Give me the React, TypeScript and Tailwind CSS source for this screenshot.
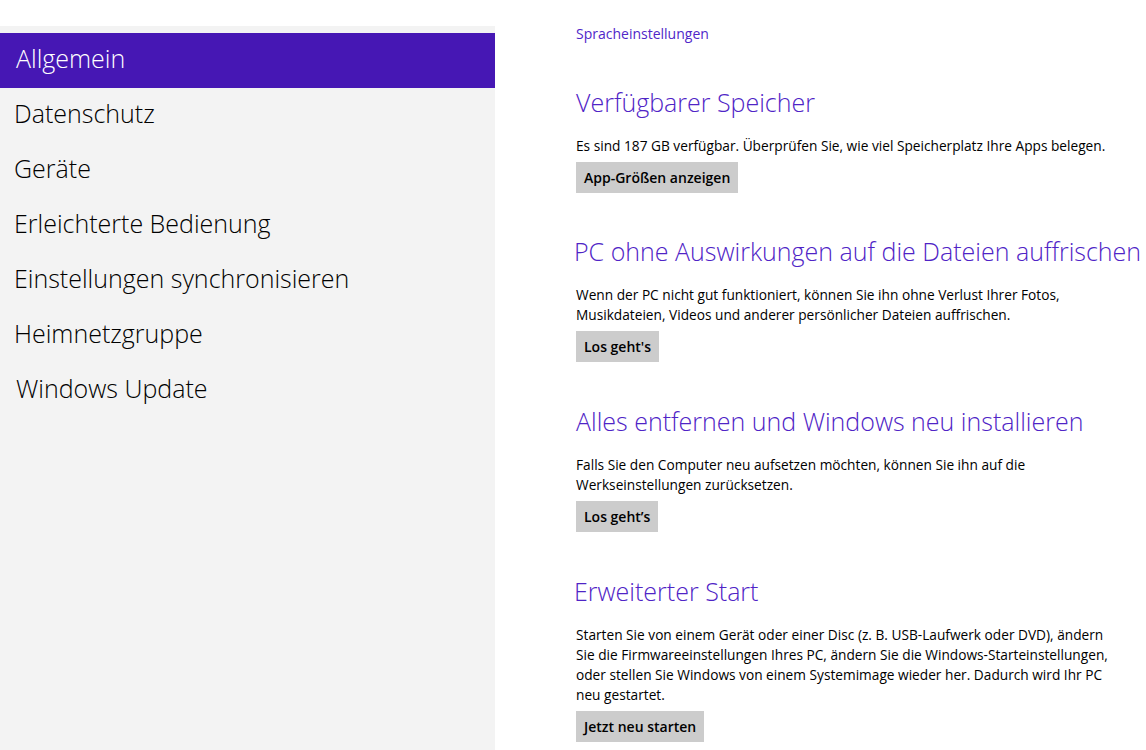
import React from "react";

const navItems = [
  { label: "Allgemein", active: true, pad: "pl-[16px]" },
  { label: "Datenschutz", active: false, pad: "pl-[14px]" },
  { label: "Geräte", active: false, pad: "pl-[14px]" },
  { label: "Erleichterte Bedienung", active: false, pad: "pl-[14px]" },
  { label: "Einstellungen synchronisieren", active: false, pad: "pl-[14px]" },
  { label: "Heimnetzgruppe", active: false, pad: "pl-[14px]" },
  { label: "Windows Update", active: false, pad: "pl-[16px]" },
];

function Section({
  title,
  lines,
  button,
  gap,
  shift,
}: {
  title: string;
  lines: string[];
  button: string;
  gap: string;
  shift?: boolean;
}) {
  return (
    <section className={gap}>
      <h2
        className={`text-[25px] leading-[36px] font-light text-[#4f24c6] whitespace-nowrap ${
          shift ? "-ml-[2px]" : ""
        }`}
      >
        {title}
      </h2>
      <p className="mt-[16px] text-[13.7px] leading-[20px] text-black whitespace-nowrap">
        {lines.map((l, i) => (
          <React.Fragment key={i}>
            {l}
            {i < lines.length - 1 && <br />}
          </React.Fragment>
        ))}
      </p>
      <button className="mt-[6px] h-[31px] px-[8px] bg-[#cccccc] text-[14px] font-semibold text-black">
        {button}
      </button>
    </section>
  );
}

export default function App() {
  return (
    <div className="flex h-[750px] w-[1146px] overflow-hidden bg-white font-['Open_Sans',sans-serif]">
      {/* Left navigation */}
      <aside className="mt-[26px] w-[495px] shrink-0 bg-[#f3f3f3] pt-[7px]">
        {navItems.map((item) => (
          <div
            key={item.label}
            className={`flex h-[55px] items-center pb-[3px] ${item.pad} text-[25px] font-light ${
              item.active ? "bg-[#4617b4] text-white" : "text-black"
            }`}
          >
            {item.label}
          </div>
        ))}
      </aside>

      {/* Content */}
      <main className="pl-[81px] pt-[24px]">
        <a className="block text-[14px] leading-[20px] text-[#5027c9]">Spracheinstellungen</a>

        <Section
          gap="mt-[40px]"
          title="Verfügbarer Speicher"
          lines={["Es sind 187 GB verfügbar. Überprüfen Sie, wie viel Speicherplatz Ihre Apps belegen."]}
          button="App-Größen anzeigen"
        />
        <Section
          gap="mt-[40px]"
          shift
          title="PC ohne Auswirkungen auf die Dateien auffrischen"
          lines={[
            "Wenn der PC nicht gut funktioniert, können Sie ihn ohne Verlust Ihrer Fotos,",
            "Musikdateien, Videos und anderer persönlicher Dateien auffrischen.",
          ]}
          button="Los geht's"
        />
        <Section
          gap="mt-[41px]"
          title="Alles entfernen und Windows neu installieren"
          lines={[
            "Falls Sie den Computer neu aufsetzen möchten, können Sie ihn auf die",
            "Werkseinstellungen zurücksetzen.",
          ]}
          button="Los geht’s"
        />
        <Section
          gap="mt-[41px]"
          shift
          title="Erweiterter Start"
          lines={[
            "Starten Sie von einem Gerät oder einer Disc (z. B. USB-Laufwerk oder DVD), ändern",
            "Sie die Firmwareeinstellungen Ihres PC, ändern Sie die Windows-Starteinstellungen,",
            "oder stellen Sie Windows von einem Systemimage wieder her. Dadurch wird Ihr PC",
            "neu gestartet.",
          ]}
          button="Jetzt neu starten"
        />
      </main>
    </div>
  );
}
